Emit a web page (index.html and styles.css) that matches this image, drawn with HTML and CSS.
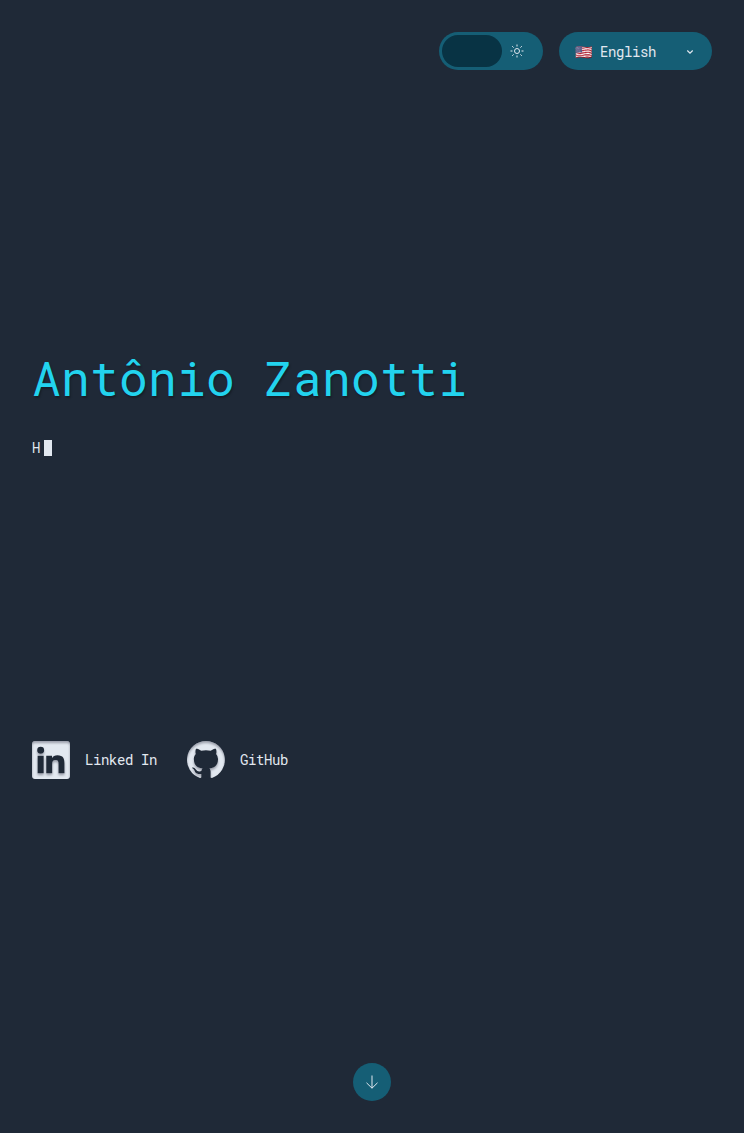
FILE: index.html
```html
<!DOCTYPE html>
<html lang="en">
<head>
<meta charset="utf-8">
<title>Antônio Zanotti</title>
<link rel="stylesheet" href="styles.css">
</head>
<body>
<main class="page">
  <header class="toolbar">
    <button class="theme" aria-label="Toggle theme">
      <span class="thumb"></span>
      <svg class="sun" viewBox="0 0 14 14" fill="none" stroke="currentColor" stroke-width="1"><circle cx="7" cy="7" r="2.5"/><path d="M7 .5v2M7 11.5v2M.5 7h2M11.5 7h2M2.2 2.2l1.4 1.4M10.4 10.4l1.4 1.4M2.2 11.8l1.4-1.4M10.4 3.6l1.4-1.4"/></svg>
    </button>
    <button class="language">
      <span class="flag">🇺🇸</span>
      <span class="language-name">English</span>
      <svg class="chevron" viewBox="0 0 8 6" fill="none" stroke="currentColor" stroke-width="1.2"><path d="M1.3 1.5 4 4.2l2.7-2.7"/></svg>
    </button>
  </header>
  <h1 class="name">Antônio Zanotti</h1>
  <p class="typed">H<span class="cursor"></span></p>
  <nav class="links">
    <a class="link">
      <svg class="logo" viewBox="0 0 24 24"><defs><filter id="inset" x="-20%" y="-20%" width="140%" height="140%" color-interpolation-filters="sRGB"><feComponentTransfer in="SourceAlpha" result="inverse"><feFuncA type="linear" slope="-1" intercept="1"/></feComponentTransfer><feGaussianBlur in="inverse" stdDeviation=".7"/><feOffset dy="1.2"/><feComposite in2="SourceAlpha" operator="in" result="shade"/><feFlood flood-color="#1e1e32" flood-opacity=".36"/><feComposite in2="shade" operator="in"/><feMerge><feMergeNode in="SourceGraphic"/><feMergeNode/></feMerge></filter></defs><path filter="url(#inset)" fill="currentColor" d="M22.23 0H1.77C.79 0 0 .77 0 1.73v20.54C0 23.23.79 24 1.77 24h20.46c.98 0 1.77-.77 1.77-1.73V1.73C24 .77 23.21 0 22.23 0zM7.37 20.3H3.55V9.24h3.82V20.3zM5.47 8.1a2.2 2.2 0 1 1 0-4.4 2.2 2.2 0 0 1 0 4.4zM20.5 20.3h-3.76v-5.81c0-1.42-.28-2.42-1.88-2.42s-2.11 1-2.11 2.42v5.81H9V9.24h3.62v1.58c.68-1.15 1.85-1.78 3.43-1.78 3.68 0 4.45 2.24 4.45 5.12v6.14z"/></svg>
      <span>Linked In</span>
    </a>
    <a class="link">
      <svg class="logo" viewBox="0 .3 24 24"><path filter="url(#inset)" fill="currentColor" d="M12 .3a12 12 0 0 0-3.8 23.38c.6.12.83-.26.83-.57L9 21.07c-3.34.72-4.04-1.61-4.04-1.61-.55-1.39-1.34-1.76-1.34-1.76-1.08-.74.09-.73.09-.73 1.2.09 1.83 1.24 1.83 1.24 1.08 1.83 2.81 1.3 3.5 1 .1-.78.42-1.31.76-1.61-2.67-.3-5.47-1.33-5.47-5.93 0-1.31.47-2.38 1.24-3.22-.14-.3-.54-1.52.1-3.18 0 0 1-.32 3.3 1.23a11.5 11.5 0 0 1 6 0c2.28-1.55 3.29-1.23 3.29-1.23.64 1.66.24 2.88.12 3.18a4.65 4.65 0 0 1 1.23 3.22c0 4.61-2.8 5.63-5.48 5.92.42.36.81 1.1.81 2.22l-.01 3.29c0 .31.2.69.82.57A12 12 0 0 0 12 .3"/></svg>
      <span>GitHub</span>
    </a>
  </nav>
  <button class="down" aria-label="Scroll down">
    <svg class="arrow" viewBox="0 0 14 14" fill="none" stroke="currentColor"><path d="M7 .5v12.7M1.5 7.8 7 13.2l5.5-5.4"/></svg>
  </button>
</main>
</body>
</html>
```
FILE: styles.css
```css
* { box-sizing: border-box; margin: 0; padding: 0; }
body { background: #1f2937; color: #e2e8f0; font: 400 14px/20px "Roboto Mono", "DejaVu Sans Mono", monospace; letter-spacing: -.402px; }
.page { height: 1133px; padding: 32px; display: flex; flex-direction: column; }
.toolbar { display: flex; justify-content: flex-end; gap: 16px; height: 38px; }
button { border: 0; color: inherit; font: inherit; letter-spacing: inherit; background: #155e75; }
.theme { width: 104px; height: 38px; border-radius: 19px; padding: 3px; display: flex; align-items: center; }
.thumb { width: 60px; height: 32px; border-radius: 16px; background: #083344; }
.sun { width: 14px; height: 14px; margin-left: 8px; }
.language { width: 153px; height: 38px; border-radius: 19px; padding: 2px 18px 0 16px; display: flex; align-items: center; }
.flag { width: 25px; text-align: left; white-space: nowrap; }
.language-name { flex: 1; text-align: left; }
.chevron { width: 8px; height: 6px; }
.name { margin-top: 284px; font-size: 48px; line-height: 48px; font-weight: 400; letter-spacing: .194px; color: #22d3ee; text-shadow: 1px 2px 2px rgba(0, 0, 0, .3); white-space: nowrap; }
.typed { margin-top: 36px; height: 20px; display: flex; align-items: center; gap: 4px; }
.cursor { width: 8px; height: 16px; background: #e2e8f0; }
.links { margin-top: 283px; height: 38px; display: flex; gap: 30px; }
.link { display: flex; align-items: center; gap: 15px; white-space: nowrap; }
.logo { width: 38px; height: 38px; }
.down { margin: auto auto 0; width: 38px; height: 38px; border-radius: 50%; display: flex; align-items: center; justify-content: center; }
.arrow { width: 14px; height: 14px; }
```
